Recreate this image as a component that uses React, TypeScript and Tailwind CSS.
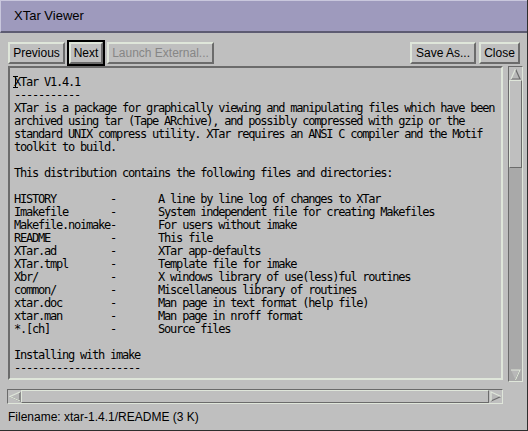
import React from 'react';

const LIGHT = '#dfe6da';

const lines = [
  'XTar V1.4.1',
  '-----------',
  'XTar is a package for graphically viewing and manipulating files which have been',
  'archived using tar (Tape ARchive), and possibly compressed with gzip or the',
  'standard UNIX compress utility. XTar requires an ANSI C compiler and the Motif',
  'toolkit to build.',
  '',
  'This distribution contains the following files and directories:',
  '',
  'HISTORY         -       A line by line log of changes to XTar',
  'Imakefile       -       System independent file for creating Makefiles',
  'Makefile.noimake-       For users without imake',
  'README          -       This file',
  'XTar.ad         -       XTar app-defaults',
  'XTar.tmpl       -       Template file for imake',
  'Xbr/            -       X windows library of use(less)ful routines',
  'common/         -       Miscellaneous library of routines',
  'xtar.doc        -       Man page in text format (help file)',
  'xtar.man        -       Man page in nroff format',
  '*.[ch]          -       Source files',
  '',
  'Installing with imake',
  '---------------------',
];

function Button({
  label,
  width,
  disabled,
}: {
  label: string;
  width: string;
  disabled?: boolean;
}) {
  return (
    <div
      className={`${width} h-[22px] flex items-center justify-center border-2 border-t-[#dfe6da] border-l-[#dfe6da] border-b-[#6b6b6b] border-r-[#6b6b6b] text-[12px] leading-none ${
        disabled ? 'text-[#868686]' : 'text-black'
      }`}
    >
      {label}
    </div>
  );
}

// small beveled arrow used by the scrollbars
function Arrow({ dir }: { dir: 'up' | 'down' | 'left' | 'right' }) {
  const shapes = {
    up: { fill: '5.5,1 10,11 1,11', light: '1,11 5.5,1', dark: '5.5,1 10,11 1,11' },
    down: { fill: '1,1 10,1 5.5,11', light: '1,1 10,1 5.5,11', dark: '10,1 5.5,11' },
    left: { fill: '11,1 1,5.5 11,10', light: '11,1 1,5.5 11,10', dark: '1,5.5 11,10 11,1' },
    right: { fill: '1,1 11,5.5 1,10', light: '1,10 1,1 11,5.5', dark: '11,5.5 1,10' },
  }[dir];
  return (
    <svg width="12" height="12" viewBox="0 0 12 12" className="block">
      <polygon points={shapes.fill} fill="#b8b8b8" />
      <polyline points={shapes.dark} fill="none" stroke="#6b6b6b" strokeWidth="1.2" />
      <polyline points={shapes.light} fill="none" stroke={LIGHT} strokeWidth="1.2" />
    </svg>
  );
}

export default function App() {
  return (
    <div
      className="w-[528px] h-[431px] bg-[#bfbfbf] flex flex-col border-r border-b border-[#2e2e2e] overflow-hidden"
      style={{ fontFamily: '"Liberation Sans", Arial, sans-serif' }}
    >
      {/* title bar */}
      <div className="h-[33px] shrink-0 bg-[#9e9abd] border-t border-l border-[#c9c7dd] border-b-2 border-b-[#5d5b72] flex items-center pl-[13px] text-[13px] text-black">
        XTar Viewer
      </div>

      {/* toolbar */}
      <div className="mt-[7px] h-[26px] shrink-0 flex items-center pl-[8px] pr-[7px]">
        <Button label="Previous" width="w-[57px]" />
        <div className="ml-[2px] w-[38px] h-[26px] border-2 border-black flex">
          <div className="flex-1 flex items-center justify-center border-2 border-t-[#dfe6da] border-l-[#dfe6da] border-b-[#6b6b6b] border-r-[#6b6b6b] text-[12px] leading-none">
            Next
          </div>
        </div>
        <div className="ml-[2px]">
          <Button label="Launch External..." width="w-[107px]" disabled />
        </div>
        <div className="flex-1" />
        <Button label="Save As..." width="w-[66px]" />
        <div className="ml-[3px]">
          <Button label="Close" width="w-[41px]" />
        </div>
      </div>

      {/* text area + vertical scrollbar */}
      <div className="flex items-start shrink-0">
        <div className="ml-[8px] w-[495px] h-[314px] border-2 border-t-[#6b6b6b] border-l-[#6b6b6b] border-b-[#dfe6da] border-r-[#dfe6da] overflow-hidden pt-[8px] pl-[4px] relative">
          <pre
            className="text-[12px] leading-[13px] tracking-[-1.22px] text-black m-0"
            style={{ fontFamily: '"DejaVu Sans Mono", "Liberation Mono", monospace' }}
          >
            {lines.join('\n')}
          </pre>
          <svg width="5" height="12" className="absolute left-[3px] top-[8px]">
            <path d="M0 0.5H5M0 11.5H5M2.5 0V12" stroke="#000" strokeWidth="1" />
          </svg>
        </div>
        <div className="ml-[5px] w-[15px] h-[316px] border border-t-[#6b6b6b] border-l-[#6b6b6b] border-b-[#dfe6da] border-r-[#dfe6da] bg-[#a9a9a9] flex flex-col">
          <div className="h-[13px] flex items-center justify-center bg-[#bfbfbf]">
            <Arrow dir="up" />
          </div>
          <div className="h-[88px] bg-[#bfbfbf] border border-t-[#dfe6da] border-l-[#dfe6da] border-b-[#6b6b6b] border-r-[#6b6b6b]" />
          <div className="flex-1" />
          <div className="h-[13px] flex items-center justify-center">
            <Arrow dir="down" />
          </div>
        </div>
      </div>

      {/* horizontal scrollbar */}
      <div className="mt-[7px] ml-[7px] w-[496px] h-[15px] shrink-0 border border-t-[#6b6b6b] border-l-[#6b6b6b] border-b-[#dfe6da] border-r-[#dfe6da] flex">
        <div className="w-[13px] flex items-center justify-center">
          <Arrow dir="left" />
        </div>
        <div className="flex-1 border border-t-[#dfe6da] border-l-[#dfe6da] border-b-[#6b6b6b] border-r-[#6b6b6b]" />
        <div className="w-[13px] flex items-center justify-center">
          <Arrow dir="right" />
        </div>
      </div>

      {/* status */}
      <div className="flex-1 flex items-center pl-[8px] text-[12px] text-black">
        Filename: xtar-1.4.1/README (3 K)
      </div>
    </div>
  );
}
